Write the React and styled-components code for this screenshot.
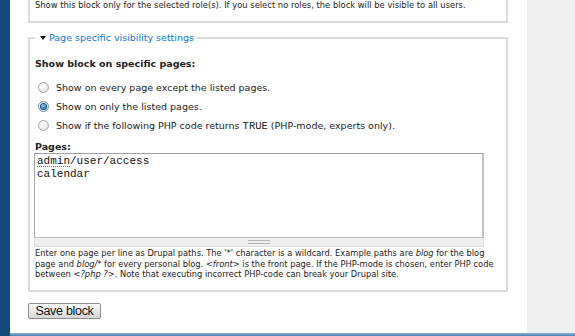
import React from "react";
import styled, { createGlobalStyle } from "styled-components";

const GlobalStyle = createGlobalStyle`
  html, body {
    margin: 0;
    padding: 0;
    background: #fff;
  }
  body {
    font-family: "DejaVu Sans", Verdana, sans-serif;
    color: #222;
  }
`;

const Page = styled.div`
  width: 575px;
  height: 336px;
  overflow: hidden;
  display: flex;
`;

const LeftBar = styled.div`
  width: 10px;
  background: #174a7c;
`;

const Column = styled.div`
  flex: 1;
  display: flex;
  flex-direction: column;
`;

const Body = styled.div`
  flex: 1;
  display: flex;
  min-height: 0;
`;

const Main = styled.div`
  width: 517px;
  padding-left: 18px;
  box-sizing: border-box;
  background: #fff;
`;

const Side = styled.div`
  flex: 1;
  background: #eeeeee;
`;

const BottomStrip = styled.div`
  height: 3px;
  background: linear-gradient(#8cb0d4, #4c7eae);
`;

const CutFieldset = styled.div`
  width: 480px;
  height: 23px;
  box-sizing: border-box;
  border: 2px solid #dadada;
  border-top: none;
  padding-left: 5px;
  font-size: 8.4px;
  line-height: 10px;
  white-space: nowrap;
`;

const Fieldset = styled.fieldset`
  width: 480px;
  box-sizing: border-box;
  margin: 9px 0 0;
  padding: 0 5px 10px;
  border: 2px solid #dadada;
  min-width: 0;
`;

const Legend = styled.legend`
  padding: 0 3px 0 5px;
  font-size: 9.5px;
  line-height: 12px;
  color: #0b7ad0;
  display: flex;
  align-items: center;
  gap: 3px;
`;

const Arrow = styled.span`
  width: 0;
  height: 0;
  border-left: 3px solid transparent;
  border-right: 3px solid transparent;
  border-top: 4px solid #111;
`;

const Heading = styled.div`
  margin-top: 13px;
  font-size: 9.5px;
  font-weight: bold;
  line-height: 14px;
`;

const RadioList = styled.div`
  margin-top: 7px;
  display: flex;
  flex-direction: column;
`;

const RadioRow = styled.label`
  height: 19px;
  display: flex;
  align-items: center;
  padding-left: 3px;
  gap: 7px;
  font-size: 9.5px;
  white-space: nowrap;
`;

const Radio = styled.span`
  width: 11px;
  height: 11px;
  box-sizing: border-box;
  border-radius: 50%;
  border: 1px solid ${(p) => (p.$checked ? "#6f8aa4" : "#a8a8a8")};
  background: radial-gradient(circle at 40% 35%, #ffffff 0%, #f2f2f2 40%, #d4d4d4 100%);
  display: flex;
  align-items: center;
  justify-content: center;

  &::after {
    content: "";
    display: ${(p) => (p.$checked ? "block" : "none")};
    width: 5px;
    height: 5px;
    border-radius: 50%;
    background: radial-gradient(circle at 40% 35%, #9fd4f6 0%, #2a86d0 55%, #0c4f8c 100%);
    box-shadow: 0 0 0 1px #1f4f7a;
  }
`;

const Code = styled.code`
  font-family: "Liberation Mono", "Courier New", monospace;
  font-size: 10.5px;
`;

const Label = styled.div`
  margin-top: 5px;
  font-size: 9.5px;
  font-weight: bold;
  line-height: 13px;
`;

const TextBox = styled.div`
  margin-left: -1px;
  width: 450px;
  height: 85px;
  box-sizing: border-box;
  border: 1px solid #bdbdbd;
  border-top-color: #a0a0a0;
  border-left-color: #a8a8a8;
  border-right: 2px solid #c4c4c4;
  padding: 1px 2px;
  font-family: "Liberation Mono", "Courier New", monospace;
  font-size: 11px;
  line-height: 13px;
  color: #111;
`;

const Misspelled = styled.span`
  text-decoration: underline dotted #e04040;
  text-decoration-thickness: 1px;
  text-underline-offset: 2px;
`;

const Grippie = styled.div`
  margin-left: -1px;
  width: 450px;
  height: 9px;
  box-sizing: border-box;
  background: #eeeeee;
  border: 1px solid #dddddd;
  border-top: none;
  display: flex;
  justify-content: center;
  align-items: center;
`;

const Grip = styled.span`
  width: 22px;
  height: 4px;
  border-top: 1px solid #b5b5b5;
  border-bottom: 1px solid #b5b5b5;
  box-sizing: border-box;
`;

const Description = styled.div`
  margin-top: 1px;
  font-size: 8.3px;
  line-height: 10.5px;
  white-space: nowrap;
  color: #222;
`;

const SaveButton = styled.button`
  margin-top: 11px;
  width: 73px;
  height: 16px;
  padding: 0;
  box-sizing: border-box;
  border: 1px solid #8c8c8c;
  border-radius: 2px;
  background: linear-gradient(#fbfbfb, #e9e9e9 50%, #d6d6d6);
  font-family: "Liberation Sans", Arial, sans-serif;
  font-size: 12.5px;
  letter-spacing: -0.3px;
  line-height: 14px;
  color: #111;
`;

const options = [
  { text: "Show on every page except the listed pages.", checked: false },
  { text: "Show on only the listed pages.", checked: true },
  {
    text: (
      <>
        Show if the following PHP code returns <Code>TRUE</Code> (PHP-mode, experts only).
      </>
    ),
    checked: false,
  },
];

export default function App() {
  return (
    <Page>
      <GlobalStyle />
      <LeftBar />
      <Column>
        <Body>
          <Main>
            <CutFieldset>
              Show this block only for the selected role(s). If you select no roles, the block will be visible to all users.
            </CutFieldset>

            <Fieldset>
              <Legend>
                <Arrow />
                Page specific visibility settings
              </Legend>
              <Heading>Show block on specific pages:</Heading>
              <RadioList>
                {options.map((o, i) => (
                  <RadioRow key={i}>
                    <Radio $checked={o.checked} />
                    <span>{o.text}</span>
                  </RadioRow>
                ))}
              </RadioList>
              <Label>Pages:</Label>
              <TextBox>
                <div>
                  <Misspelled>admin</Misspelled>/user/access
                </div>
                <div>calendar</div>
              </TextBox>
              <Grippie>
                <Grip />
              </Grippie>
              <Description>
                Enter one page per line as Drupal paths. The '*' character is a wildcard. Example paths are <em>blog</em> for the blog
                <br />
                page and <em>blog/*</em> for every personal blog. <em>&lt;front&gt;</em> is the front page. If the PHP-mode is chosen, enter PHP code
                <br />
                between <em>&lt;?php ?&gt;</em>. Note that executing incorrect PHP-code can break your Drupal site.
              </Description>
            </Fieldset>

            <SaveButton>Save block</SaveButton>
          </Main>
          <Side />
        </Body>
        <BottomStrip />
      </Column>
    </Page>
  );
}
